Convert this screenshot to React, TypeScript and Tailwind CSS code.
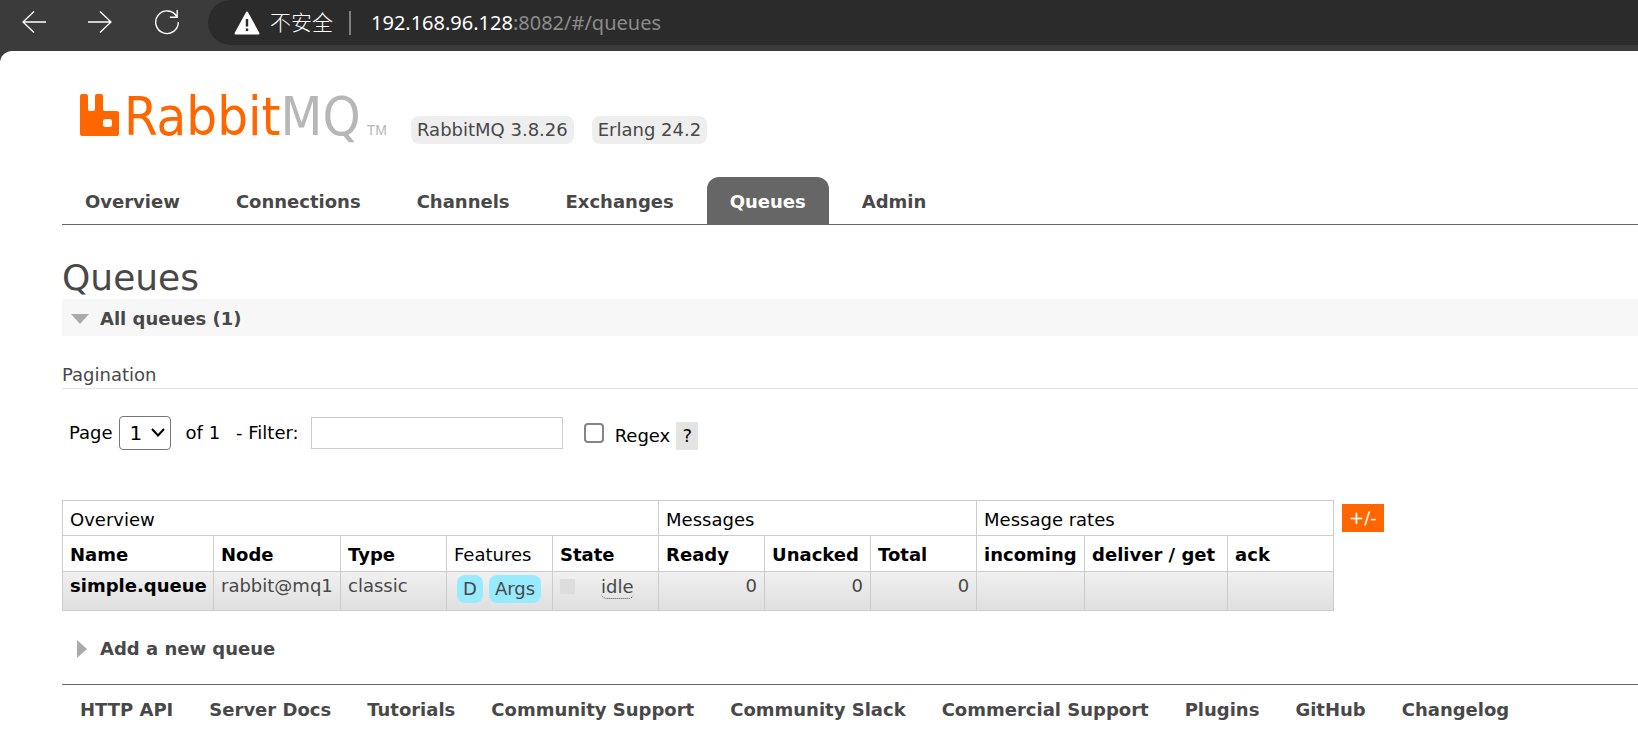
const tabs = ["Overview", "Connections", "Channels", "Exchanges", "Queues", "Admin"];

const footerLinks = [
  "HTTP API",
  "Server Docs",
  "Tutorials",
  "Community Support",
  "Community Slack",
  "Commercial Support",
  "Plugins",
  "GitHub",
  "Changelog",
];

function ArrowIcon({ flip = false }: { flip?: boolean }) {
  return (
    <svg viewBox="0 0 24 24" className={flip ? "size-6 rotate-180" : "size-6"} fill="none" stroke="currentColor" strokeWidth="1.3">
      <path d="M24 12H.8M12 1.5 1 12l11 10.5" />
    </svg>
  );
}

function BrowserBar() {
  return (
    <div className="flex h-[51px] items-start bg-[#3b3b3b] text-white">
      <div className="flex h-11 w-52 shrink-0 items-center gap-[42px] pl-[22px]">
        <button aria-label="Back"><ArrowIcon /></button>
        <button aria-label="Forward"><ArrowIcon flip /></button>
        <button aria-label="Reload">
          <svg viewBox="0 0 26 26" className="size-[26px]" fill="none" stroke="currentColor" strokeWidth="1.4">
            <path d="M22.800 7.600A11.300 11.300 0 1 0 24.300 13M23.200 1v7.200h-7.400" />
          </svg>
        </button>
      </div>
      <div className="flex h-[45px] flex-1 items-center rounded-l-full bg-[#2b2b2b] pl-[26px] font-['Noto_Sans','Noto_Sans_CJK_SC',sans-serif] text-xl whitespace-nowrap">
        <svg viewBox="0 0 26 24" className="mr-2.5 h-6 w-[26px]">
          <path d="M13 1.5 24.500 22.500H1.500Z" fill="#fff" stroke="#fff" strokeWidth="2" strokeLinejoin="round" />
          <path d="M11.800 8h2.400v7.500h-2.400zM11.800 17.500h2.400v2.400h-2.400z" fill="#2b2b2b" />
        </svg>
        <span className="text-[21px] font-light">不安全</span>
        <span className="ml-4 h-6 w-0.5 bg-[#808080]" />
        <span className="ml-5">192.168.96.128<span className="text-[#8c8c8c]">:8082/#/queues</span></span>
      </div>
    </div>
  );
}

function Logo() {
  return (
    <a href="#/" aria-label="RabbitMQ" className="flex w-[307px] items-end">
      <svg viewBox="0 0 40 42" className="mr-1 h-[42px] w-10">
        <path
          fillRule="evenodd"
          fill="#f60"
          d="M2 0h4q2 0 2 2v13q0 2 2 2h3q2 0 2-2V2q0-2 2-2h4q2 0 2 2v13q0 2 2 2h12q2 0 2 2v21q0 2-2 2H2q-2 0-2-2V2q0-2 2-2ZM25.500 25q-2.500 0-2.500 2.500v3q0 2.500 2.500 2.500h4q2.500 0 2.500-2.500v-3q0-2.500-2.500-2.500Z"
        />
      </svg>
      <span className="font-['DejaVu_Sans_Condensed',sans-serif] text-[54px] leading-[38px] text-[#f60]">
        Rabbit<span className="text-[#b7b7b7]">MQ</span>
      </span>
      <span className="ml-auto font-['Liberation_Sans',sans-serif] text-sm leading-3 text-[#b7b7b7]">TM</span>
    </a>
  );
}

export default function App() {
  return (
    <div className="min-h-screen overflow-hidden bg-[#3b3b3b] font-['DejaVu_Sans',Verdana,sans-serif] text-lg leading-7 text-[#484848]">
      <BrowserBar />
      <div className="min-h-[702px] rounded-tl-xl bg-white pl-[62px]">
        <header>
          <div className="flex items-start pt-[43px] pl-[18px] whitespace-nowrap">
            <Logo />
            <div className="ml-6 flex gap-[18px] pt-[22px]">
              <span className="rounded-lg bg-[#eee] px-1.5">RabbitMQ 3.8.26</span>
              <span className="rounded-lg bg-[#eee] px-1.5">Erlang 24.2</span>
            </div>
          </div>
          <nav className="mt-[33px] flex gap-2.5 border-b border-[#666]">
            {tabs.map((tab) => (
              <a
                key={tab}
                href={"#/" + tab.toLowerCase()}
                className={
                  tab === "Queues"
                    ? "rounded-t-xl bg-[#666] px-[23px] pt-[11px] pb-2 font-bold text-white"
                    : "px-[23px] pt-[11px] pb-2 font-bold"
                }
              >
                {tab}
              </a>
            ))}
          </nav>
        </header>

        <main>
          <h1 className="mt-8 text-4xl leading-[42px]">Queues</h1>
          <h2>
            <button className="flex h-[37px] w-full items-center bg-[#f7f7f7] pt-0.5 pl-[9px] font-bold">
              <svg viewBox="0 0 18 10" className="mr-[11px] h-2.5 w-[18px]"><path d="M0 0h18L9 10Z" fill="#aaa" /></svg>
              All queues (1)
            </button>
          </h2>
          <h3 className="mt-[25px] border-b border-[#e4e4e4] leading-[27px]">Pagination</h3>

          <form className="mt-[27px] flex h-[34px] items-center pl-[7px] text-black">
            <label htmlFor="page">Page</label>
            <span className="relative ml-1.5 flex">
              <select id="page" className="h-[34px] w-[52px] appearance-none rounded-sm border border-[#767676] bg-white pl-2.5 text-xl">
                <option>1</option>
              </select>
              <svg viewBox="0 0 14 9" className="pointer-events-none absolute top-3 right-1.5 h-[9px] w-3.5" fill="none" stroke="#000" strokeWidth="2">
                <path d="m1 1 6 6.500L13 1" />
              </svg>
            </span>
            <span className="ml-[15px]">of 1</span>
            <label htmlFor="filter" className="ml-4">- Filter:</label>
            <input id="filter" type="text" className="ml-3 h-8 w-[252px] border border-[#ccc] bg-white px-1" />
            <input id="regex" type="checkbox" className="ml-[21px] size-5 appearance-none rounded border-2 border-[#858585] bg-white" />
            <label htmlFor="regex" className="ml-[11px] pt-1.5">Regex</label>
            <button type="button" className="ml-1.5 h-7 w-[22px] self-end bg-[#e4e4e4]">?</button>
          </form>

          <div className="mt-[50px] flex items-start">
            <table className="w-[1272px] table-fixed border-collapse text-left [&_td]:border [&_td]:border-[#ccc] [&_td]:px-[7px] [&_th]:border [&_th]:border-[#ccc] [&_th]:px-[7px] [&_th]:pt-[3px] [&_th]:whitespace-nowrap">
              <colgroup>
                <col className="w-[151px]" />
                <col className="w-[127px]" />
                <col className="w-[106px]" />
                <col className="w-[106px]" />
                <col className="w-[106px]" />
                <col className="w-[106px]" />
                <col className="w-[106px]" />
                <col className="w-[106px]" />
                <col className="w-[108px]" />
                <col className="w-[143px]" />
                <col className="w-[106px]" />
              </colgroup>
              <thead className="text-black">
                <tr className="h-[35px]">
                  <th colSpan={5} className="font-normal">Overview</th>
                  <th colSpan={3} className="font-normal">Messages</th>
                  <th colSpan={3} className="font-normal">Message rates</th>
                </tr>
                <tr className="h-9">
                  <th>Name</th>
                  <th>Node</th>
                  <th>Type</th>
                  <th className="font-normal">Features</th>
                  <th>State</th>
                  <th>Ready</th>
                  <th>Unacked</th>
                  <th>Total</th>
                  <th>incoming</th>
                  <th>deliver / get</th>
                  <th>ack</th>
                </tr>
              </thead>
              <tbody>
                <tr className="h-[39px] bg-linear-to-b from-[#f0f0f0] to-[#dfdfdf] align-top">
                  <td><a href="#/queues/simple.queue" className="font-bold text-black">simple.queue</a></td>
                  <td>rabbit@mq1</td>
                  <td>classic</td>
                  <td>
                    <div className="flex gap-1.5 pt-[3px] pl-[3px]">
                      <span className="rounded-lg bg-[#98ebff] px-1.5">D</span>
                      <span className="rounded-lg bg-[#98ebff] px-1.5">Args</span>
                    </div>
                  </td>
                  <td>
                    <div className="flex items-start">
                      <span className="mt-[7px] mr-[26px] size-[15px] bg-[#ddd]" />
                      <abbr className="mt-1 rounded-md border-b border-dotted border-[#484848] leading-[22px] no-underline">idle</abbr>
                    </div>
                  </td>
                  <td className="text-right">0</td>
                  <td className="text-right">0</td>
                  <td className="text-right">0</td>
                  <td />
                  <td />
                  <td />
                </tr>
              </tbody>
            </table>
            <button className="mt-1 ml-2 bg-[#f60] px-[7px] text-white">+/-</button>
          </div>

          <h2 className="mt-6">
            <button className="flex items-center pl-[15px] font-bold">
              <svg viewBox="0 0 10 18" className="mr-[13px] h-[18px] w-2.5"><path d="M0 0v18L10 9Z" fill="#aaa" /></svg>
              Add a new queue
            </button>
          </h2>
        </main>

        <footer className="mt-[21px] border-t border-[#666] pt-[11px] pl-[18px]">
          <ul className="flex gap-9 whitespace-nowrap">
            {footerLinks.map((label) => (
              <li key={label}><a href="#/" className="font-bold">{label}</a></li>
            ))}
          </ul>
        </footer>
      </div>
    </div>
  );
}
